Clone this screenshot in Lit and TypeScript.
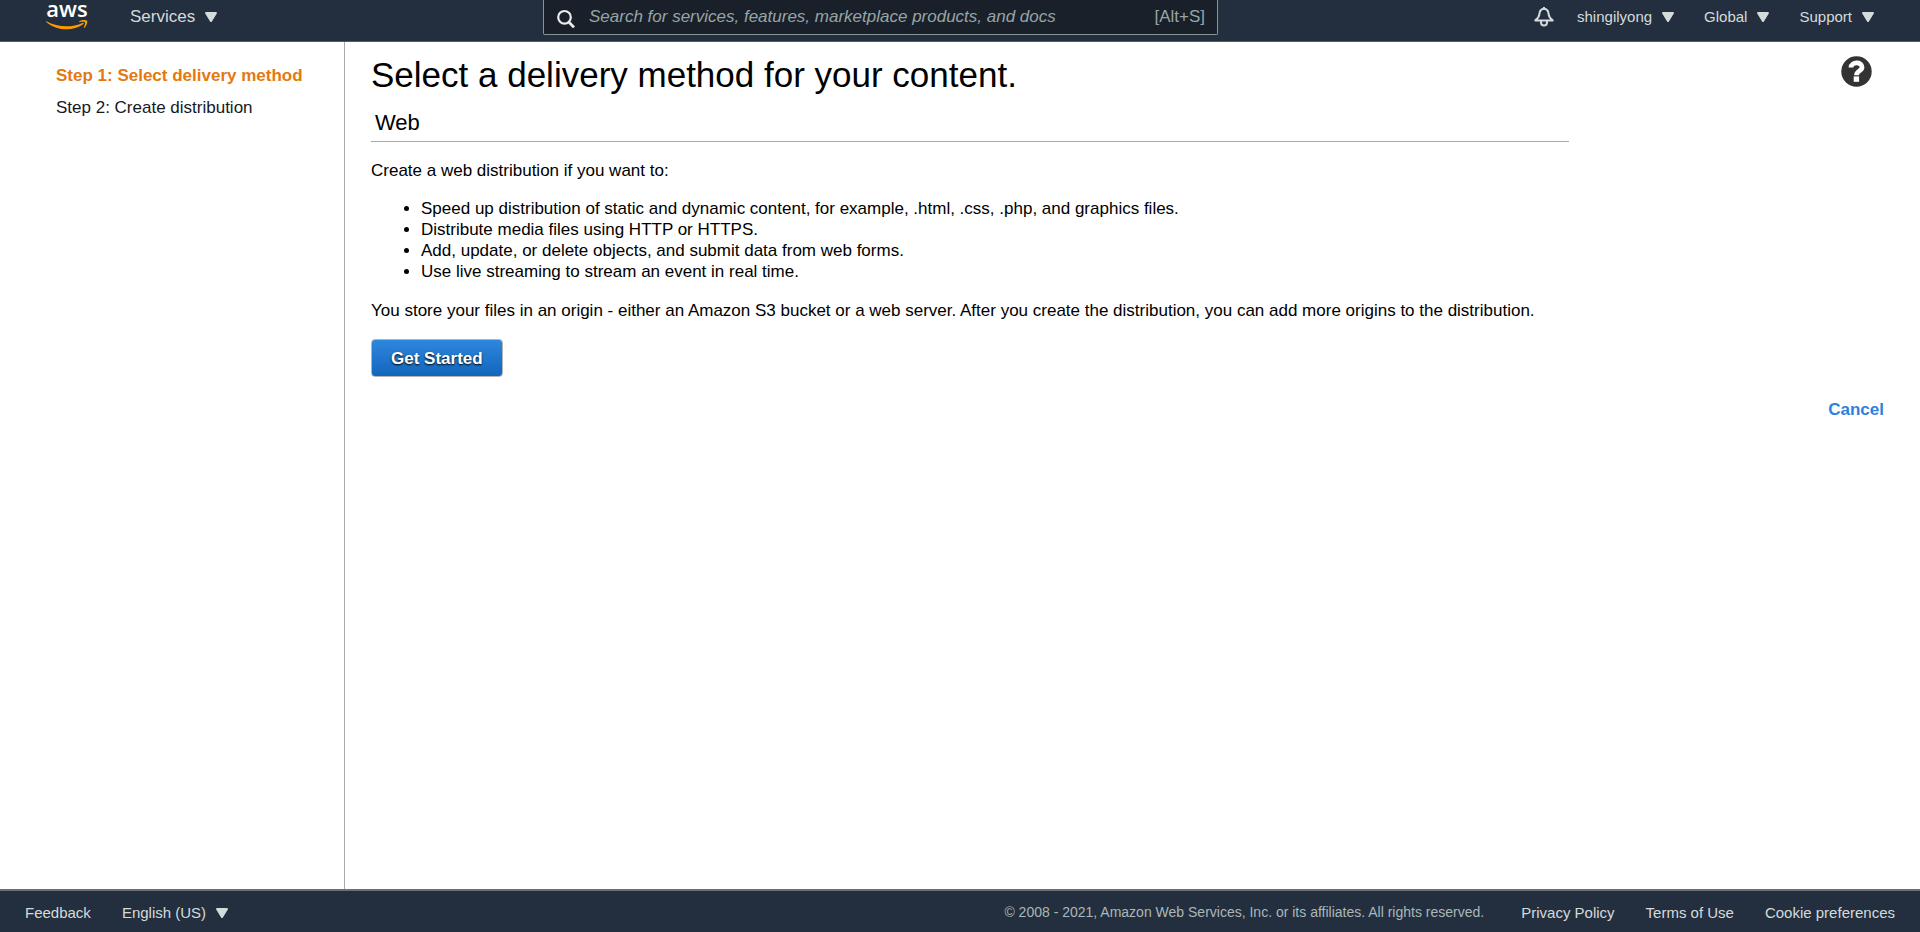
import { LitElement, html, css } from "lit";
import { customElement } from "lit/decorators.js";

@customElement("caret-icon")
class CaretIcon extends LitElement {
  static styles = css`
    :host { display: flex; }
    .caret { display: block; width: 12px; height: 10px; fill: #d5dbdb; }
  `;
  render() {
    return html`<svg class="caret" viewBox="0 0 12 10" aria-hidden="true">
      <path d="M1 0h10a.9.9 0 0 1 .8 1.400L6.900 9.400a1 1 0 0 1-1.800 0L.2 1.400A.9.9 0 0 1 1 0z" />
    </svg>`;
  }
}

@customElement("console-header")
class ConsoleHeader extends LitElement {
  static styles = css`
    :host {
      display: grid;
      grid-template-columns: 543fr 675fr 702fr;
      box-sizing: border-box;
      height: 42px;
      background: #232f3e;
      border-bottom: 1px solid #545b64;
      color: #d5dbdb;
      overflow: hidden;
    }
    .start, .end { display: flex; align-items: center; height: 33px; white-space: nowrap; }
    .start { gap: 42px; padding-left: 46px; }
    .end { justify-content: flex-end; gap: 30px; padding-right: 46px; }
    .logo { display: block; width: 42px; height: 30px; }
    .wordmark { font-family: "Open Sans", "Noto Sans", sans-serif; font-size: 22px; font-weight: 600; fill: #fff; }
    .item {
      display: flex; align-items: center; gap: 10px; padding: 0; border: 0;
      background: none; color: inherit; font: inherit; font-size: 15px; cursor: pointer;
    }
    .item.large { font-size: 17px; }
    .account { display: flex; align-items: center; gap: 23px; }
    .bell { display: block; width: 20px; height: 20px; }
    .search {
      display: flex; align-items: center; box-sizing: border-box; height: 35px;
      padding: 0 12px; gap: 13px;
      background: #1a2029; border: 1px solid #879596; border-top: 0;
      border-radius: 0 0 2px 2px;
    }
    .glass { width: 20px; height: 20px; flex: none; margin-top: 4px; }
    .field {
      flex: 1; min-width: 0; padding: 0; border: 0; outline: 0; background: none;
      color: #d5dbdb; font: inherit; font-size: 17px; height: 33px; align-self: flex-start;
    }
    .field::placeholder { color: #95a5a6; font-style: italic; opacity: 1; }
    .hint { color: #95a5a6; font-size: 17px; line-height: 33px; align-self: flex-start; }
  `;
  menu(label: string) {
    return html`<button class="item" type="button">${label}<caret-icon></caret-icon></button>`;
  }
  render() {
    return html`
      <div class="start">
        <svg class="logo" viewBox="0 0 42 30" role="img" aria-label="aws">
          <text class="wordmark" x="21" y="15" text-anchor="middle">aws</text>
          <path fill="#f90" d="M.4 19.200C11.500 25.600 26 25.800 36.500 20.900C37.600 20.400 38.300 21.500 37.200 22.300C26.500 29.800 10.500 28.900.2 20C-.2 19.600 0 19 .4 19.200z" />
          <path fill="#f90" d="M33.200 19.300C35.500 17.700 39.600 17.700 40.900 18.500C42 19.500 40.700 24 38.400 25.900C38 26.200 37.600 26 37.800 25.500C38.500 23.700 39.600 21 39 20.300C38.300 19.600 35.500 19.700 33.600 19.900C33 20 32.900 19.600 33.200 19.300z" />
        </svg>
        <button class="item large" type="button">Services<caret-icon></caret-icon></button>
      </div>
      <label class="search">
        <svg class="glass" viewBox="0 0 20 20" fill="none" stroke="#eaeded" stroke-width="2.200" aria-hidden="true">
          <circle cx="8.500" cy="8.300" r="6.300" /><path d="M12.800 13L18 18.400" stroke-width="2.800" />
        </svg>
        <input class="field" type="search" aria-label="Search"
          placeholder="Search for services, features, marketplace products, and docs" />
        <span class="hint">[Alt+S]</span>
      </label>
      <div class="end">
        <div class="account">
          <svg class="bell" viewBox="0 0 20 20" fill="none" stroke="#d5dbdb" stroke-width="2" stroke-linejoin="round" aria-label="Notifications" role="img">
            <path d="M10 0v2M10 1.800C6.600 2 5.600 4.600 5.400 7C5.200 9.800 4 11.500 1.300 13.400H18.700C16 11.500 14.800 9.800 14.600 7C14.400 4.600 13.400 2 10 1.800z" />
            <path d="M7 14V15.500a3 3 0 0 0 6 0V14" />
          </svg>
          ${this.menu("shingilyong")}
        </div>
        ${this.menu("Global")} ${this.menu("Support")}
      </div>
    `;
  }
}

@customElement("console-footer")
class ConsoleFooter extends LitElement {
  static styles = css`
    :host {
      display: flex; align-items: center; justify-content: space-between;
      box-sizing: border-box; height: 43px; padding: 2px 25px 0;
      background: #232f3e; border-top: 2px solid #687078;
      font-size: 15px; color: #d5dbdb; white-space: nowrap;
    }
    .group { display: flex; align-items: center; gap: 31px; }
    .plain, .language {
      padding: 0; border: 0; background: none; color: inherit; font: inherit;
      text-decoration: none; cursor: pointer;
    }
    .language { display: flex; align-items: center; gap: 10px; }
    .legal { font-size: 14px; color: #aab7b8; margin-right: 6px; }
  `;
  render() {
    return html`
      <div class="group">
        <a class="plain" href="#feedback">Feedback</a>
        <button class="language" type="button">English (US)<caret-icon></caret-icon></button>
      </div>
      <div class="group">
        <span class="legal">© 2008 - 2021, Amazon Web Services, Inc. or its affiliates. All rights reserved.</span>
        <a class="plain" href="#privacy">Privacy Policy</a>
        <a class="plain" href="#terms">Terms of Use</a>
        <a class="plain" href="#cookies">Cookie preferences</a>
      </div>
    `;
  }
}

@customElement("app-root")
class AppRoot extends LitElement {
  static styles = css`
    :host {
      display: flex; flex-direction: column; min-height: 100vh;
      background: #fff; color: #000;
      font-family: "Liberation Sans", Arial, sans-serif;
      font-size: 17px; line-height: 21px;
    }
    .body { flex: 1; display: flex; }
    .steps {
      box-sizing: border-box; width: 345px; flex: none; margin: 0; padding: 23px 0 0 56px;
      list-style: none; border-right: 1px solid #aaa;
      display: flex; flex-direction: column; gap: 11px; color: #16191f;
    }
    .current { color: #e47911; font-weight: bold; }
    .main { flex: 1; min-width: 0; padding: 14px 36px 0 26px; }
    .top { display: flex; justify-content: space-between; align-items: flex-start; padding-right: 12px; }
    .title { margin: 0; font-size: 35px; line-height: 38px; font-weight: normal; }
    .help { padding: 0; border: 0; background: none; display: flex; cursor: pointer; }
    .mark { display: block; width: 32px; height: 32px; }
    .panel { max-width: 1198px; }
    .sub { margin: 0 0 18px; padding: 15px 4px 5px; font-size: 22px; line-height: 27px; font-weight: normal; border-bottom: 1px solid #aaa; }
    .text { margin: 0; }
    .list { margin: 17px 0 18px; padding-left: 50px; }
    .start {
      display: block; margin-top: 18px; height: 38px; padding: 0 19px;
      border: 1px solid #b4b4b4; border-radius: 4px;
      background: linear-gradient(#2e87de, #1166bb); color: #fff;
      font: inherit; font-weight: bold; text-shadow: 0 1px 2px #000; cursor: pointer;
    }
    .actions { display: flex; justify-content: flex-end; margin-top: 22px; }
    .cancel { color: #2e82de; font-weight: bold; text-decoration: none; }
  `;
  render() {
    return html`
      <console-header role="banner"></console-header>
      <div class="body">
        <ol class="steps">
          <li class="current">Step 1: Select delivery method</li>
          <li>Step 2: Create distribution</li>
        </ol>
        <main class="main">
          <div class="top">
            <h1 class="title">Select a delivery method for your content.</h1>
            <button class="help" type="button" aria-label="Help">
              <svg class="mark" viewBox="0 0 32 32" aria-hidden="true">
                <circle cx="16.500" cy="15.500" r="15.200" fill="#333" />
                <path d="M11 11.500C11.300 5.600 22 5.300 22 11.200C22 15 16.500 14.800 16.500 19.200" fill="none" stroke="#fff" stroke-width="4.800" />
                <path d="M13.700 20.400h5.400v5.400h-5.400z" fill="#fff" />
              </svg>
            </button>
          </div>
          <section class="panel">
            <h2 class="sub">Web</h2>
            <p class="text">Create a web distribution if you want to:</p>
            <ul class="list">
              <li>Speed up distribution of static and dynamic content, for example, .html, .css, .php, and graphics files.</li>
              <li>Distribute media files using HTTP or HTTPS.</li>
              <li>Add, update, or delete objects, and submit data from web forms.</li>
              <li>Use live streaming to stream an event in real time.</li>
            </ul>
            <p class="text">You store your files in an origin - either an Amazon S3 bucket or a web server. After you create the distribution, you can add more origins to the distribution.</p>
            <button class="start" type="button">Get Started</button>
          </section>
          <div class="actions"><a class="cancel" href="#cancel">Cancel</a></div>
        </main>
      </div>
      <console-footer role="contentinfo"></console-footer>
    `;
  }
}
